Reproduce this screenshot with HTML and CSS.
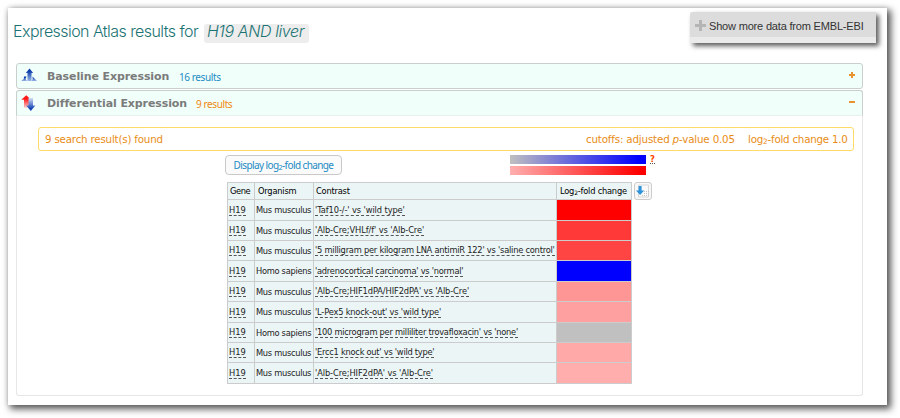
FILE: index.html
```html
<!DOCTYPE html>
<html lang="en">
<head>
<meta charset="utf-8">
<title>Expression Atlas results</title>
<link rel="stylesheet" href="styles.css">
</head>
<body>
<main class="page">
  <header class="top">
    <h1 class="title"><span class="title-text">Expression Atlas results for</span><em class="query">H19 AND liver</em></h1>
    <div class="more"><div class="more-label">
      <svg class="more-icon" viewBox="0 0 11 11"><path d="M4 0h3v4h4v3H7v4H4V7H0V4h4z" fill="#b5b5b5"/></svg>
      <span class="more-text">Show more data from EMBL-EBI</span></div></div>
  </header>
  <section class="bar">
    <svg class="bar-icon" viewBox="0 0 16 16">
      <defs>
        <linearGradient id="up" x1="0" y1="0" x2="0" y2="1"><stop offset=".2" stop-color="#0a3caa"/><stop offset="1" stop-color="#9db8e8"/></linearGradient>
        <linearGradient id="red" x1="0" y1="0" x2="0" y2="1"><stop offset=".3" stop-color="#ff1a1a"/><stop offset="1" stop-color="#ffd0d0"/></linearGradient>
        <linearGradient id="down" x1="0" y1="0" x2="0" y2="1"><stop offset="0" stop-color="#d5e0f7"/><stop offset=".8" stop-color="#1746b4"/></linearGradient>
      </defs>
      <path d="M8.500 .5l3.700 4.500h-1.700v8h-4V5H4.800z" fill="url(#up)"/>
      <path d="M3 8.500h2.500L4.500 11l1.500 2H0l2.800-2zM11.500 8.500L16 13h-5.500l1.200-1.800z" fill="url(#up)"/>
    </svg>
    <h2 class="bar-title base">Baseline Expression</h2><span class="count blue">16 results</span>
    <svg class="toggle" viewBox="0 0 6 6"><path d="M2 0h2v2h2v2H4v2H2V4H0V2h2z" fill="#e8932e"/></svg>
  </section>
  <section class="bar open">
    <svg class="bar-icon" viewBox="0 0 16 16">
      <path d="M5.200 .3l5 4.500H8v8H3v-8H.3z" fill="url(#red)"/>
      <path d="M7.500 3h4.500v7.500h2.300L9.800 16 5.300 10.500h2.200z" fill="url(#down)"/>
    </svg>
    <h2 class="bar-title diff">Differential Expression</h2><span class="count orange">9 results</span>
    <svg class="toggle" viewBox="0 0 6 6"><path d="M0 2h6v2H0z" fill="#e8932e"/></svg>
  </section>
  <section class="panel">
    <div class="summary"><span class="found">9 search result(s) found</span><span class="cut">cutoffs: adjusted <i>p</i>-value 0.05</span><span class="fold">log<sub>2</sub>-fold change 1.0</span></div>
    <div class="controls">
      <button class="display">Display log<sub>2</sub>-fold change</button>
      <div class="legend"><div class="scale down"></div><div class="scale up"></div></div>
      <span class="help">?</span>
    </div>
    <div class="results">
      <table>
        <colgroup><col class="c-gene"><col class="c-org"><col class="c-con"><col class="c-log"></colgroup>
        <thead><tr><th class="h-gene">Gene</th><th>Organism</th><th class="h-con">Contrast</th><th class="h-log">Log<sub>2</sub>-fold change</th></tr></thead>
        <tbody>
          <tr class="tall"><td><span>H19</span></td><td class="org">Mus musculus</td><td><span class="wide">'Taf10-/-' vs 'wild type'</span></td><td class="v1"></td></tr>
          <tr><td><span>H19</span></td><td class="org">Mus musculus</td><td><span class="wide">'Alb-Cre;VHLf/f' vs 'Alb-Cre'</span></td><td class="v2"></td></tr>
          <tr><td><span>H19</span></td><td class="org">Mus musculus</td><td><span class="tight">'5 milligram per kilogram LNA antimiR 122' vs 'saline control'</span></td><td class="v3"></td></tr>
          <tr class="tall"><td><span>H19</span></td><td class="org">Homo sapiens</td><td><span class="tighter">'adrenocortical carcinoma' vs 'normal'</span></td><td class="v4"></td></tr>
          <tr><td><span>H19</span></td><td class="org">Mus musculus</td><td><span class="wide">'Alb-Cre;HIF1dPA/HIF2dPA' vs 'Alb-Cre'</span></td><td class="v5"></td></tr>
          <tr class="tall"><td><span>H19</span></td><td class="org">Mus musculus</td><td><span class="medium">'L-Pex5 knock-out' vs 'wild type'</span></td><td class="v6"></td></tr>
          <tr><td><span>H19</span></td><td class="org">Homo sapiens</td><td><span class="tighter">'100 microgram per milliliter trovafloxacin' vs 'none'</span></td><td class="v7"></td></tr>
          <tr><td><span>H19</span></td><td class="org">Mus musculus</td><td><span class="tighter">'Ercc1 knock out' vs 'wild type'</span></td><td class="v8"></td></tr>
          <tr class="tall"><td><span>H19</span></td><td class="org">Mus musculus</td><td><span class="wide">'Alb-Cre;HIF2dPA' vs 'Alb-Cre'</span></td><td class="v9"></td></tr>
        </tbody>
      </table>
      <button class="download"><svg viewBox="0 0 14 14" width="14" height="14">
        <path d="M2.500 1h10v12h-10z" fill="#fafafa" stroke="#d8d8d8"/>
        <path d="M8 7.500h5M8 9.500h5M6 11.500h7" stroke="#c4c4c4" stroke-dasharray="1 1"/>
        <path d="M2.600 2h3v4.500h2.600L4.100 11 0 6.500h2.600z" fill="#2f93db"/></svg></button>
    </div>
  </section>
</main>
</body>
</html>
```
FILE: styles.css
```css
* { box-sizing: border-box; }
body { margin: 0; height: 418px; overflow: hidden; background: #fff; padding: 8px 13px 13px 8px; }
.page { height: 397px; padding: 4px 24px 0 8px; background: #fff; box-shadow: 3px 3px 7px 1px rgba(0,0,0,.65), 0 0 5px rgba(0,0,0,.12); font-family: "DejaVu Sans", sans-serif; }
.top { display: flex; justify-content: space-between; height: 51px; margin: 0 -13px 0 -3px; }
.title { display: flex; align-items: center; margin: 12px 0 0; height: 19px; font: 300 16px Inter, sans-serif; color: #1b7373; white-space: nowrap; }
.title-text { width: 191px; margin-top: -5px; line-height: 16px; letter-spacing: -.56px; }
.query { width: 105px; height: 19px; padding-left: 3px; line-height: 15px; background: #ededed; border-radius: 3px; letter-spacing: -.38px; }
.more { width: 186px; height: 31px; background: #eaeaea; border-radius: 3px 0 0 0; box-shadow: 3px 3px 5px rgba(0,0,0,.65); }
.more-label { display: flex; align-items: center; height: 25px; padding: 3px 0 0 5px; background: #dcdcdc; border-radius: 3px 0 0 0; }
.more-icon { width: 11px; height: 11px; margin-right: 3px; margin-top: -2px; }
.more-text { font: 11px/14px "Liberation Sans", sans-serif; letter-spacing: -.18px; color: #333; white-space: nowrap; }
.bar { display: flex; align-items: center; width: 847px; height: 26px; padding: 0 7px 0 4px; border: 1px solid #c9cfcc; border-radius: 3px; background: #f0fffa; }
.open { margin-top: 1px; border-radius: 3px 3px 0 0; border-bottom-color: #e8f0ed; }
.bar-icon { width: 16px; height: 16px; margin-right: 10px; }
.bar-title { margin: 0; padding-top: 1px; font: bold 11px/14px "DejaVu Sans", sans-serif; letter-spacing: -.1px; color: #7b7b7b; white-space: nowrap; }
.base { width: 132px; }
.diff { width: 149px; }
.count { flex: 1; padding-top: 1px; font: 10px/14px "Noto Sans", sans-serif; letter-spacing: -.4px; }
.blue { color: #1c8bc4; }
.orange { color: #ee8a11; }
.toggle { width: 6px; height: 6px; margin-top: -2px; }
.panel { width: 847px; height: 280px; border: 1px solid #e6e6e6; border-top: 0; border-radius: 0 0 3px 3px; padding: 11px 8px 0 21px; }
.summary { display: flex; align-items: center; height: 24px; padding: 0 5px 0 6px; border: 1px solid #ffdc69; border-radius: 3px; font-size: 10.300px; line-height: 14px; letter-spacing: -.2px; color: #e98c16; white-space: nowrap; }
.found { flex: 1; }
.cut { width: 162px; letter-spacing: -.17px; }
.fold { width: 100px; letter-spacing: -.23px; }
sub { font-size: .72em; line-height: 0; vertical-align: -.2em; }
.controls { display: flex; height: 31px; padding: 4px 0 0 187px; }
.display { width: 117px; height: 20px; padding: 0; border: 1px solid #c9c9c9; border-radius: 4px; background: #fafafa; color: #1c8bc4; font: 10px/14px "Noto Sans", sans-serif; letter-spacing: -.6px; white-space: nowrap; }
.legend { display: flex; flex-direction: column; gap: 2px; width: 136px; margin-left: 168px; }
.scale { height: 9px; }
.scale.down { background: linear-gradient(90deg, #c0c0c0, #00f 95%); }
.scale.up { background: linear-gradient(90deg, #ffafaf, #f00 95%); }
.help { height: 9px; margin-left: 4px; border-bottom: 1px dotted #555; font-size: 8.500px; line-height: 8px; font-weight: bold; color: #ff4500; }
.results { display: flex; align-items: flex-start; gap: 3px; padding-left: 189px; }
table { width: 404px; table-layout: fixed; border-collapse: collapse; background: #ebf5f6; font-size: 8.300px; line-height: 10px; color: #222; }
.c-gene { width: 27px; }
.c-org { width: 59px; }
.c-con { width: 243px; }
.c-log { width: 75px; }
th, td { padding: 0 0 0 1px; border: 1px solid #ccc; text-align: left; white-space: nowrap; font-weight: normal; }
th { height: 17px; padding-left: 3px; letter-spacing: -.22px; color: #000; }
th.h-gene, th.h-con { padding-left: 2px; }
th.h-gene { letter-spacing: -.4px; }
.org { letter-spacing: -.3px; }
tbody tr { height: 20px; }
tbody tr.tall { height: 21px; }
td span { display: inline-block; border-bottom: 1px dashed #555; }
.wide { letter-spacing: -.11px; }
.medium { letter-spacing: -.2px; }
.tight { letter-spacing: -.235px; }
.tighter { letter-spacing: -.26px; }
.v1 { background: #f00; }
.v2 { background: #ff3838; }
.v3 { background: #ff4444; }
.v4 { background: #00f; }
.v5 { background: #ff9696; }
.v6 { background: #ffa0a0; }
.v7 { background: #c0c0c0; }
.v8 { background: #ffa9a9; }
.v9 { background: #ffadad; }
.download { display: flex; align-items: center; justify-content: center; width: 18px; height: 18px; margin-left: -1px; padding: 0; border: 1px solid #ccc; border-radius: 3px; background: #f8f8f8; }
```
